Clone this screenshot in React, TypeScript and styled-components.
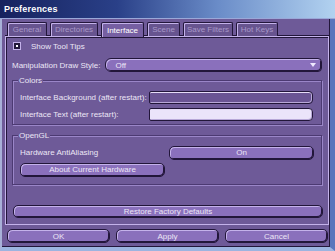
import React from "react";
import styled, { createGlobalStyle } from "styled-components";

const GlobalStyle = createGlobalStyle`
  html, body {
    margin: 0;
    padding: 0;
    background: #6e5a98;
  }
  * { box-sizing: border-box; }
`;

// palette
const BG = "#6e5a98";
const DARK = "#22163a";
const FACE = "#8a70bc";
const HILITE = "#c4b2ea";
const TEXT = "#ece6f6";

const tabs = [
  { label: "General", w: 40 },
  { label: "Directories", w: 48 },
  { label: "Interface", w: 43 },
  { label: "Scene", w: 33 },
  { label: "Save Filters", w: 50 },
  { label: "Hot Keys", w: 42 },
];

function App() {
  return (
    <>
      <GlobalStyle />
      <Window>
        <TitleBar>Preferences</TitleBar>
        <Body>
          <TabRow>
            {tabs.map((t) => (
              <Tab key={t.label} $w={t.w} $active={t.label === "Interface"}>
                {t.label}
              </Tab>
            ))}
          </TabRow>

          <Panel>
            <CheckRow>
              <CheckBox />
              <Label>Show Tool Tips</Label>
            </CheckRow>

            <DropRow>
              <Label>Manipulation Draw Style:</Label>
              <Dropdown>
                <span>Off</span>
                <Arrow />
              </Dropdown>
            </DropRow>

            <Group $h={45}>
              <Legend>Colors</Legend>
              <FieldRow>
                <Label>Interface Background (after restart):</Label>
                <Swatch $color="#6a5494" />
              </FieldRow>
              <FieldRow>
                <Label>Interface Text (after restart):</Label>
                <Swatch $color="#ebe4fa" />
              </FieldRow>
            </Group>

            <Group $h={50} $top={10}>
              <Legend>OpenGL</Legend>
              <FieldRow>
                <Label>Hardware AntiAliasing</Label>
                <Button $w={145}>On</Button>
              </FieldRow>
              <FieldRow>
                <Button $w={145}>About Current Hardware</Button>
              </FieldRow>
            </Group>

            <RestoreButton>Restore Factory Defaults</RestoreButton>
          </Panel>

          <Footer>
            <Button $w={103} $h={14}>OK</Button>
            <Button $w={103} $h={14}>Apply</Button>
            <Button $w={103} $h={14}>Cancel</Button>
          </Footer>
        </Body>
      </Window>
    </>
  );
}

// css styles
const Window = styled.div`
  width: 335px;
  height: 251px;
  display: flex;
  flex-direction: column;
  background: ${BG};
  font-family: "Liberation Sans", Arial, sans-serif;
  font-size: 8px;
  color: ${TEXT};
  overflow: hidden;
`;

const TitleBar = styled.div`
  height: 19px;
  flex: none;
  display: flex;
  align-items: center;
  padding-left: 4px;
  background: linear-gradient(90deg, #16225e 0%, #2a4088 35%, #6a8cc8 65%, #b2d2f0 100%);
  border-bottom: 1px solid #9aa8d8;
  color: #ffffff;
  font-weight: bold;
  font-size: 9px;
  letter-spacing: 0.2px;
`;

const Body = styled.div`
  flex: 1;
  display: flex;
  flex-direction: column;
  border-left: 2px solid #a8b0d8;
  border-right: 5px solid #5876bc;
  border-bottom: 4px solid #9cb4e0;
  box-shadow: inset -1px -1px 0 ${DARK};
  padding: 0 1px 0 3px;
`;

const TabRow = styled.div`
  height: 17px;
  flex: none;
  display: flex;
  align-items: flex-end;
  gap: 3px;
  padding-left: 2px;
`;

const Tab = styled.div<{ $w: number; $active?: boolean }>`
  width: ${(p) => p.$w}px;
  height: ${(p) => (p.$active ? 15 : 14)}px;
  display: flex;
  align-items: center;
  justify-content: center;
  white-space: nowrap;
  border: 1px solid ${DARK};
  border-bottom: none;
  border-radius: 2px 2px 0 0;
  box-shadow: inset 1px 1px 0 ${HILITE};
  background: ${(p) => (p.$active ? "#765fa2" : "#67548f")};
  color: ${(p) => (p.$active ? "#ffffff" : "#a898c8")};
  margin-bottom: ${(p) => (p.$active ? -1 : 0)}px;
  position: relative;
  z-index: ${(p) => (p.$active ? 1 : 0)};
`;

const Panel = styled.div`
  height: 189px;
  flex: none;
  display: flex;
  flex-direction: column;
  border: 1px solid ${HILITE};
  box-shadow: inset 1px 1px 0 ${DARK}, 0 -1px 0 ${DARK};
  padding: 4px 6px 0 6px;
`;

const Label = styled.span`
  white-space: nowrap;
  color: ${TEXT};
`;

const CheckRow = styled.div`
  height: 10px;
  display: flex;
  align-items: center;
  gap: 10px;
  padding-left: 1px;
`;

const CheckBox = styled.span`
  width: 8px;
  height: 8px;
  flex: none;
  background: ${DARK};
  border: 1px solid ${HILITE};
  display: flex;
  align-items: center;
  justify-content: center;
  &::after {
    content: "";
    width: 2px;
    height: 2px;
    background: #ffffff;
  }
`;

const DropRow = styled.div`
  margin-top: 7px;
  height: 14px;
  display: flex;
  align-items: center;
  gap: 5px;
`;

const Dropdown = styled.div`
  flex: 1;
  height: 14px;
  display: flex;
  align-items: center;
  justify-content: space-between;
  padding: 0 5px 0 9px;
  background: ${FACE};
  border: 1px solid ${DARK};
  border-radius: 6px 4px 4px 6px;
  box-shadow: inset 1px 1px 0 ${HILITE}, inset -1px -1px 0 ${DARK};
  color: ${TEXT};
`;

const Arrow = styled.span`
  width: 0;
  height: 0;
  border-left: 3px solid transparent;
  border-right: 3px solid transparent;
  border-top: 4px solid #f0eaff;
`;

const Group = styled.div<{ $h: number; $top?: number }>`
  position: relative;
  height: ${(p) => p.$h}px;
  margin-top: ${(p) => p.$top ?? 8}px;
  border: 1px solid #4c3a72;
  box-shadow: 1px 1px 0 #9a86c8, inset 1px 1px 0 #9a86c8;
  padding: 10px 7px 0 7px;
  display: flex;
  flex-direction: column;
  gap: 4px;
`;

const Legend = styled.span`
  position: absolute;
  top: -5px;
  left: 5px;
  padding: 0 1px;
  background: ${BG};
  line-height: 9px;
  color: ${TEXT};
`;

const FieldRow = styled.div`
  height: 13px;
  display: flex;
  align-items: center;
  justify-content: space-between;
`;

const Swatch = styled.div<{ $color: string }>`
  width: 164px;
  height: 13px;
  margin-right: 1px;
  background: ${(p) => p.$color};
  border: 1px solid ${DARK};
  border-radius: 2px 4px 4px 2px;
  box-shadow: inset 0 1px 0 #e6dcf8, inset -1px -1px 0 #b8a8d8;
`;

const Button = styled.div<{ $w: number; $h?: number }>`
  width: ${(p) => p.$w}px;
  height: ${(p) => p.$h ?? 14}px;
  flex: none;
  display: flex;
  align-items: center;
  justify-content: center;
  white-space: nowrap;
  background: ${FACE};
  border: 1px solid ${DARK};
  border-radius: 5px;
  box-shadow: inset 1px 1px 0 ${HILITE}, inset -1px -1px 0 ${DARK};
  color: ${TEXT};
`;

const RestoreButton = styled(Button).attrs({ $w: 310, $h: 13 })`
  margin-top: 20px;
  margin-left: 1px;
`;

const Footer = styled.div`
  flex: 1;
  display: flex;
  align-items: center;
  gap: 6px;
  padding-left: 2px;
`;

export default App;
